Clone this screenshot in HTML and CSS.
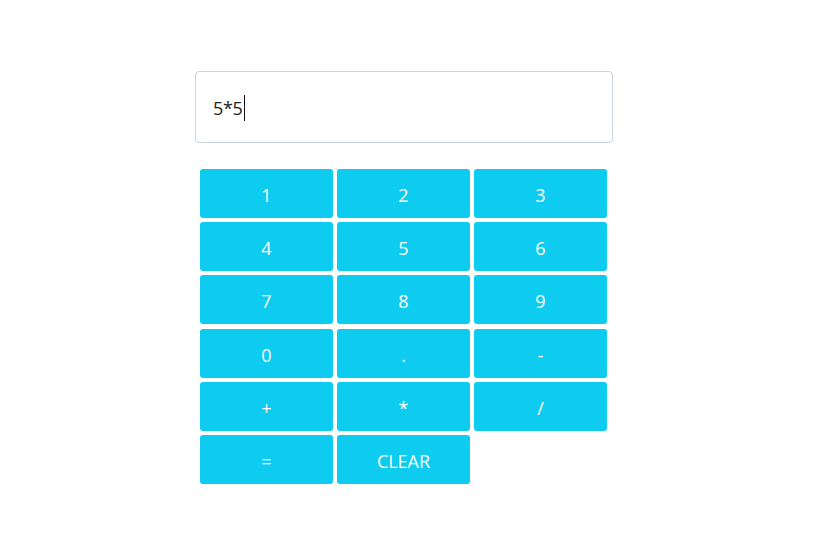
FILE: index.html
```html
<!DOCTYPE html>
<html lang="en">
<head>
<meta charset="utf-8">
<title>Calculator</title>
<link rel="stylesheet" href="styles.css">
</head>
<body>
<div class="calc">
  <div class="display"><span class="expr">5*5</span><span class="caret"></span></div>
  <div class="keys">
    <button class="key">1</button>
    <button class="key">2</button>
    <button class="key">3</button>
    <button class="key">4</button>
    <button class="key">5</button>
    <button class="key">6</button>
    <button class="key">7</button>
    <button class="key">8</button>
    <button class="key">9</button>
    <button class="key">0</button>
    <button class="key">.</button>
    <button class="key">-</button>
    <button class="key">+</button>
    <button class="key">*</button>
    <button class="key">/</button>
    <button class="key">=</button>
    <button class="key">CLEAR</button>
  </div>
</div>
</body>
</html>
```
FILE: styles.css
```css
html, body {
  margin: 0;
  padding: 0;
  background: #ffffff;
  font-family: "Open Sans", "Noto Sans", sans-serif;
}
.calc {
  width: 418px;
  margin: 71px 0 0 195px;
}
.display {
  box-sizing: border-box;
  height: 72px;
  border: 1px solid #c9d4e0;
  border-radius: 4px;
  padding: 2px 17px 0;
  display: flex;
  align-items: center;
  font-size: 18px;
  letter-spacing: -0.3px;
  color: #222;
}
.caret {
  display: inline-block;
  width: 1px;
  height: 26px;
  background: #111;
  margin-left: 1px;
}
.keys {
  display: grid;
  grid-template-columns: repeat(3, 133px);
  grid-auto-rows: 49px;
  column-gap: 4px;
  row-gap: 4.2px;
  margin: 26px 0 0 5px;
}
.key {
  border: none;
  border-radius: 3px;
  background: #0ecbf0;
  color: #ffffff;
  font-family: inherit;
  font-size: 18px;
  padding: 3px 0 0;
  margin: 0;
  cursor: pointer;
}
```
